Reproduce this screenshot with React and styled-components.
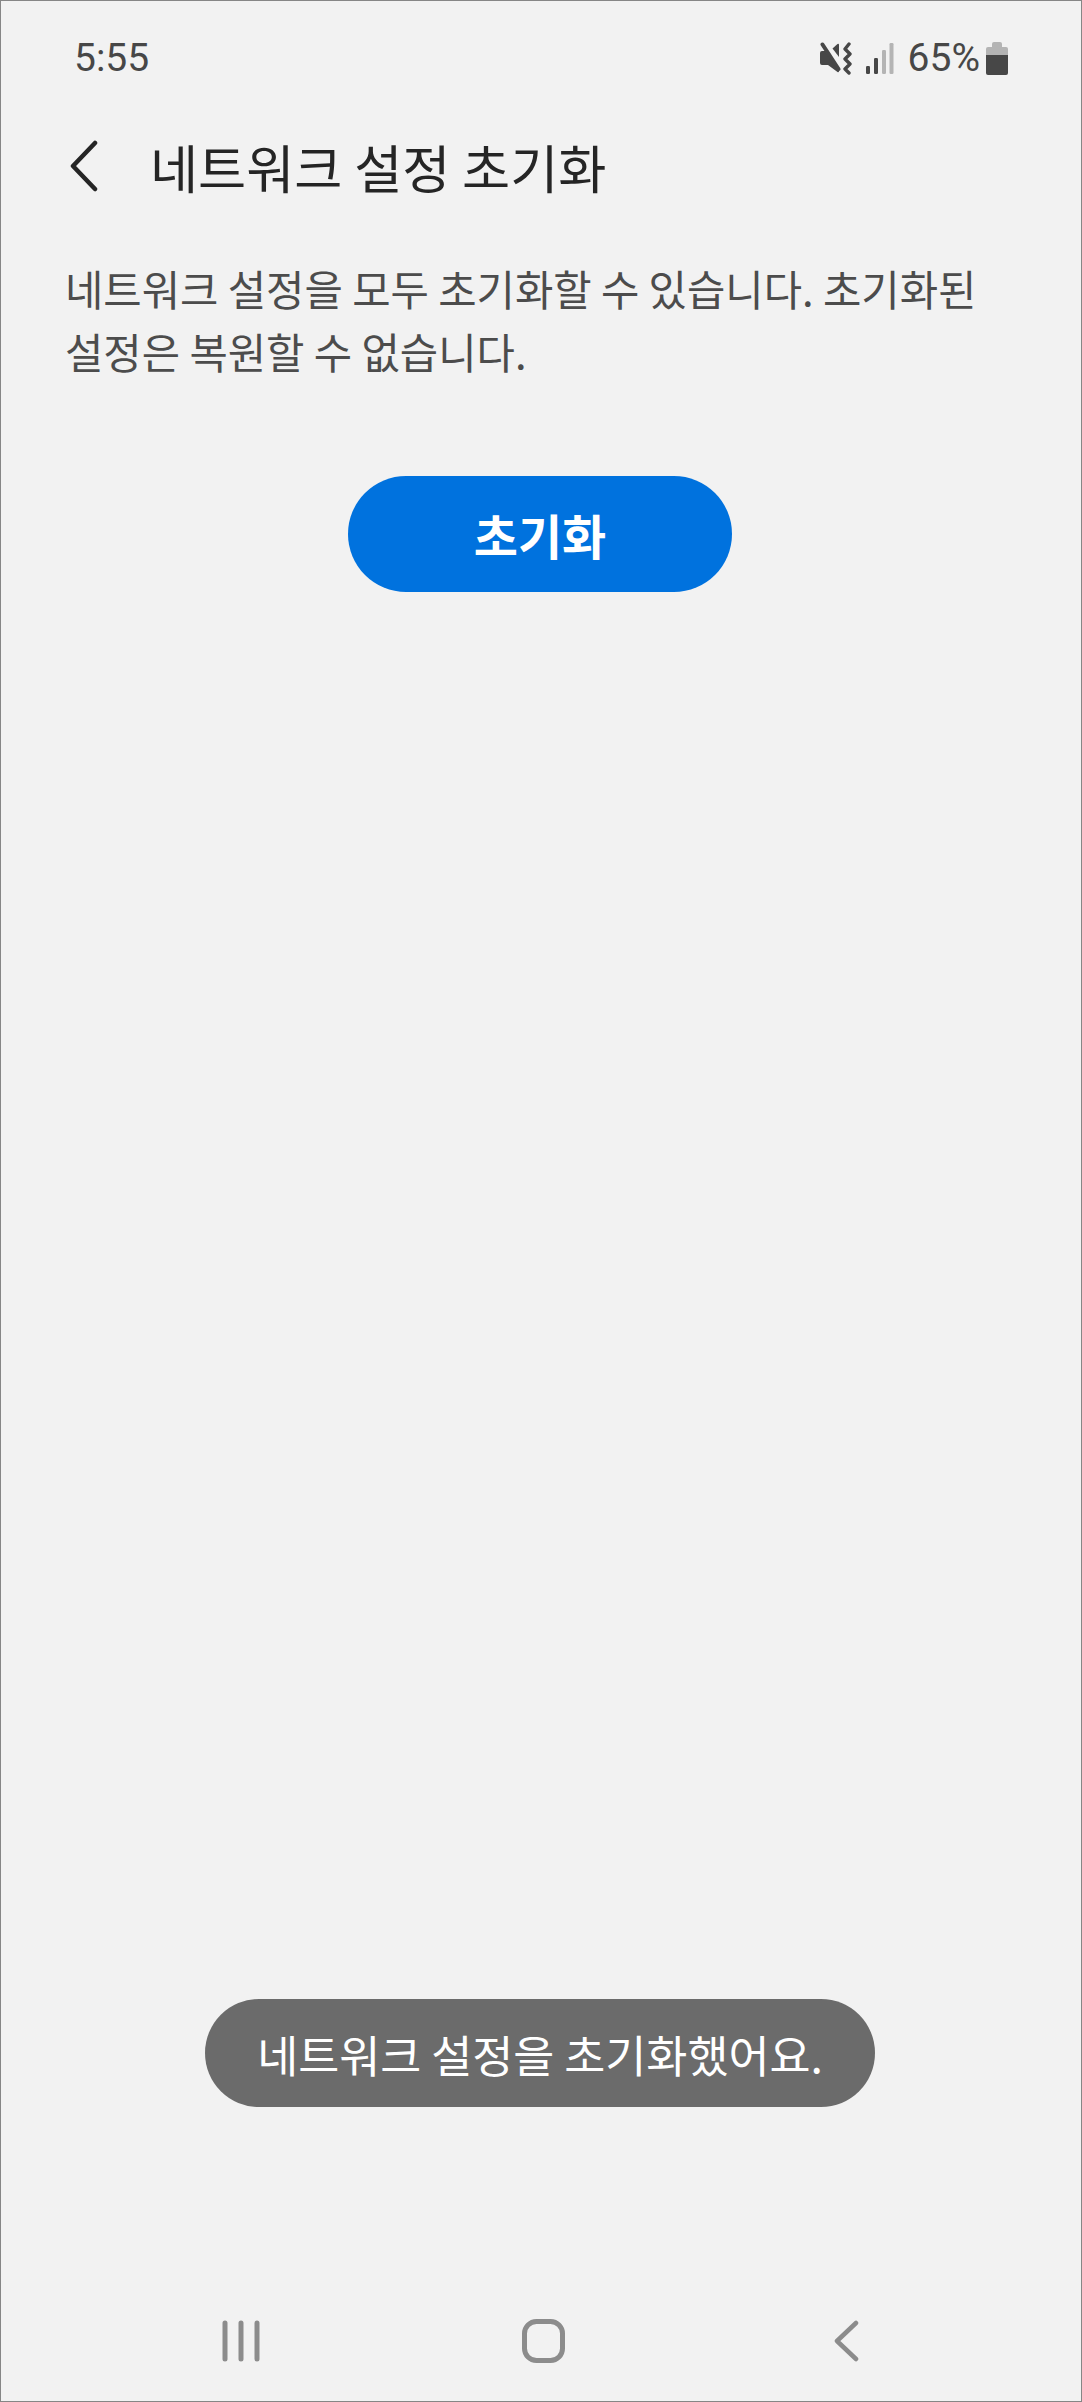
import styled, { createGlobalStyle } from 'styled-components';

const GlobalStyle = createGlobalStyle`
  html, body {
    margin: 0;
    padding: 0;
    background: #f2f2f2;
  }
`;

const Screen = styled.div`
  box-sizing: border-box;
  width: 1082px;
  height: 2402px;
  display: flex;
  flex-direction: column;
  overflow: hidden;
  background: #f2f2f2;
  border: 1px solid #868686;
  font-family: "Noto Sans CJK KR", "Noto Sans", sans-serif;
`;

const StatusBar = styled.div`
  height: 56px;
  margin-top: 29px;
  padding: 0 73px 0 73px;
  display: flex;
  align-items: center;
  justify-content: space-between;
  color: #474747;
  font-family: Roboto, sans-serif;
  font-size: 39px;
`;

const StatusIcons = styled.div`
  display: flex;
  align-items: center;
`;

const Percent = styled.span`
  margin: 0 6px 0 14px;
  font-size: 39px;
`;

const Header = styled.header`
  height: 66px;
  margin-top: 47px;
  padding-left: 69px;
  display: flex;
  align-items: center;
`;

const BackButton = styled.button`
  width: 28px;
  height: 52px;
  padding: 0;
  border: 0;
  background: none;
  display: flex;
`;

const Title = styled.h1`
  margin: 0 0 0 52px;
  color: #252525;
  font-size: 52.300px;
  font-weight: 400;
  line-height: 66px;
  white-space: nowrap;
`;

const Description = styled.p`
  margin: 58px 0 0;
  padding: 0 64px;
  color: #4c4c4c;
  font-size: 41.700px;
  line-height: 62.500px;
`;

const ResetButton = styled.button`
  align-self: center;
  width: 384px;
  height: 116px;
  margin: 94px 0 0 -2px;
  border: 0;
  border-radius: 58px;
  background: #0072de;
  color: #fff;
  font-family: inherit;
  font-size: 48px;
  font-weight: 700;
`;

const Toast = styled.div`
  align-self: center;
  height: 108px;
  margin: auto 0 0 -2px;
  padding: 0 52px;
  display: flex;
  align-items: center;
  border-radius: 54px;
  background: #6b6b6b;
  color: #fff;
  font-size: 44.600px;
  white-space: nowrap;
`;

const NavBar = styled.nav`
  height: 84px;
  margin-top: 192px;
  margin-bottom: 18px;
  padding-left: 221px;
  display: grid;
  grid-template-columns: 300px 312px auto;
  align-items: center;
`;

const MuteIcon = () => (
  <svg width="33" height="33" viewBox="0 0 33 33">
    <g fill="#474747">
      <path d="M1 11a2 2 0 0 1 2-2h3l14 18v2.500a1 1 0 0 1-1.500.5L9 23H3a2 2 0 0 1-2-2z" />
      <path d="M13.500 6.500L18.500 2a1 1 0 0 1 1.500.8V15z" />
    </g>
    <path d="M3.500 2.500L19.500 27" stroke="#474747" strokeWidth="4" strokeLinecap="round" />
    <path d="M30 2l-4 5 5 5-5 5 5 5-5 5 4 4" fill="none" stroke="#474747" strokeWidth="3.400" strokeLinecap="round" strokeLinejoin="round" />
  </svg>
);

const SignalIcon = () => (
  <svg width="28" height="32" viewBox="0 0 28 32" style={{ marginLeft: 14 }}>
    <rect x="0" y="24" width="4" height="8" rx="1.2" fill="#474747" />
    <rect x="8" y="16" width="4" height="16" rx="1.2" fill="#474747" />
    <rect x="16" y="8" width="4" height="24" rx="1.2" fill="#b4b4b4" />
    <rect x="23.500" y="1" width="4" height="31" rx="1.2" fill="#b4b4b4" />
  </svg>
);

const BatteryIcon = () => (
  <svg width="22" height="33" viewBox="0 0 22 33">
    <path d="M6 2a2 2 0 0 1 2-2h6a2 2 0 0 1 2 2v3h-10z" fill="#b4b4b4" />
    <path d="M0 13V7a2 2 0 0 1 2-2h18a2 2 0 0 1 2 2v6z" fill="#b4b4b4" />
    <path d="M0 13h22v18a2 2 0 0 1-2 2H2a2 2 0 0 1-2-2z" fill="#474747" />
  </svg>
);

const RecentsIcon = () => (
  <svg width="38" height="42" viewBox="0 0 38 42">
    <g stroke="#8c8c8c" strokeWidth="5" strokeLinecap="round">
      <path d="M3 3v36M19 3v36M35 3v36" />
    </g>
  </svg>
);

const HomeIcon = () => (
  <svg width="43" height="44" viewBox="0 0 43 44">
    <rect x="2.500" y="2.500" width="38" height="39" rx="12" fill="none" stroke="#8c8c8c" strokeWidth="5" />
  </svg>
);

const NavBackIcon = () => (
  <svg width="25" height="42" viewBox="0 0 25 42">
    <path d="M22 3L3 21l19 18" fill="none" stroke="#8c8c8c" strokeWidth="4.500" strokeLinecap="round" strokeLinejoin="round" />
  </svg>
);

export default function App() {
  return (
    <>
      <GlobalStyle />
      <Screen>
        <StatusBar>
          <span>5:55</span>
          <StatusIcons>
            <MuteIcon />
            <SignalIcon />
            <Percent>65%</Percent>
            <BatteryIcon />
          </StatusIcons>
        </StatusBar>
        <Header>
          <BackButton aria-label="뒤로">
            <svg width="28" height="52" viewBox="0 0 28 52">
              <path d="M25 3L3 26l22 23" fill="none" stroke="#252525" strokeWidth="4.500" strokeLinecap="round" strokeLinejoin="round" />
            </svg>
          </BackButton>
          <Title>네트워크 설정 초기화</Title>
        </Header>
        <Description>
          네트워크 설정을 모두 초기화할 수 있습니다. 초기화된 설정은 복원할 수 없습니다.
        </Description>
        <ResetButton>초기화</ResetButton>
        <Toast>네트워크 설정을 초기화했어요.</Toast>
        <NavBar>
          <RecentsIcon />
          <HomeIcon />
          <NavBackIcon />
        </NavBar>
      </Screen>
    </>
  );
}
